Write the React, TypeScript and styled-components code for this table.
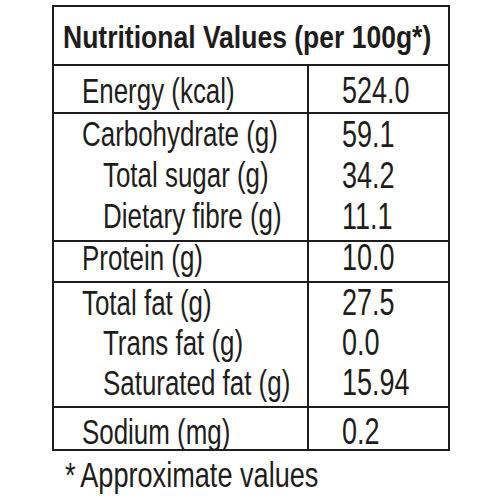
import React from "react";
import styled, { createGlobalStyle } from "styled-components";

const Global = createGlobalStyle`
  html, body { margin: 0; padding: 0; background: #fff; }
  body { width: 500px; height: 500px; overflow: hidden; }
`;

const Page = styled.div`
  width: 500px;
  height: 500px;
  padding: 5px 0 0 52px;
  box-sizing: border-box;
  font-family: "Liberation Sans", Arial, sans-serif;
  color: #1f1d1c;
`;

const Table = styled.div`
  width: 398px;
  border: 2px solid #1f1d1c;
  box-sizing: border-box;
`;

/* condensed face: Helvetica Condensed look from Arial metrics */
const Narrow = styled.span<{ $sx?: number }>`
  display: inline-block;
  white-space: nowrap;
  transform: scaleX(${(p) => p.$sx ?? 0.73});
  transform-origin: left center;
`;

const Header = styled.div`
  height: 59px;
  display: flex;
  align-items: center;
  padding: 5px 0 0 9px;
  box-sizing: border-box;
  font-weight: 700;
  font-size: 31px;
  border-bottom: 2px solid #1f1d1c;
`;

const Group = styled.div<{ $last?: boolean; $top: number; $bottom: number }>`
  display: grid;
  grid-template-columns: 253px 1fr;
  border-bottom: ${(p) => (p.$last ? "none" : "2px solid #1f1d1c")};
  & > div {
    padding-top: ${(p) => p.$top}px;
    padding-bottom: ${(p) => p.$bottom}px;
  }
`;

const Names = styled.div`
  display: flex;
  flex-direction: column;
`;

const Values = styled.div`
  display: flex;
  flex-direction: column;
  border-left: 2px solid #1f1d1c;
  padding-left: 33px;
`;

const Cell = styled.div<{ $h: number; $indent?: boolean }>`
  height: ${(p) => p.$h}px;
  display: flex;
  align-items: center;
  font-size: 35.5px;
  padding-left: ${(p) => (p.$indent ? 49 : 28)}px;
  white-space: nowrap;
`;

const Val = styled.div<{ $h: number }>`
  height: ${(p) => p.$h}px;
  display: flex;
  align-items: center;
  font-size: 36px;
`;

const Note = styled.div`
  margin-top: 4px;
  padding-left: 13px;
  font-size: 35px;
`;

const Star = styled.span`
  margin-right: 6px;
`;

type Row = { name: string; value: string; indent?: boolean };
type G = { rows: Row[]; h: number; top: number; bottom: number };

const groups: G[] = [
  { rows: [{ name: "Energy (kcal)", value: "524.0" }], h: 42, top: 4, bottom: 0 },
  {
    rows: [
      { name: "Carbohydrate (g)", value: "59.1" },
      { name: "Total sugar (g)", value: "34.2", indent: true },
      { name: "Dietary fibre (g)", value: "11.1", indent: true },
    ],
    h: 41,
    top: 0,
    bottom: 3,
  },
  { rows: [{ name: "Protein (g)", value: "10.0" }], h: 32, top: 0, bottom: 7 },
  {
    rows: [
      { name: "Total fat (g)", value: "27.5" },
      { name: "Trans fat (g)", value: "0.0", indent: true },
      { name: "Saturated fat (g)", value: "15.94", indent: true },
    ],
    h: 40,
    top: 0,
    bottom: 3,
  },
  { rows: [{ name: "Sodium (mg)", value: "0.2" }], h: 34, top: 7, bottom: 0 },
];

export default function App() {
  return (
    <>
      <Global />
      <Page>
        <Table>
          <Header>
            <Narrow $sx={0.855}>Nutritional Values (per 100g*)</Narrow>
          </Header>
          {groups.map((g, i) => (
            <Group key={i} $last={i === groups.length - 1} $top={g.top} $bottom={g.bottom}>
              <Names>
                {g.rows.map((r) => (
                  <Cell key={r.name} $h={g.h} $indent={r.indent}>
                    <Narrow>{r.name}</Narrow>
                  </Cell>
                ))}
              </Names>
              <Values>
                {g.rows.map((r) => (
                  <Val key={r.name} $h={g.h}>
                    <Narrow $sx={0.75}>{r.value}</Narrow>
                  </Val>
                ))}
              </Values>
            </Group>
          ))}
        </Table>
        <Note>
          <Narrow $sx={0.775}>
            <Star>*</Star>Approximate values
          </Narrow>
        </Note>
      </Page>
    </>
  );
}
